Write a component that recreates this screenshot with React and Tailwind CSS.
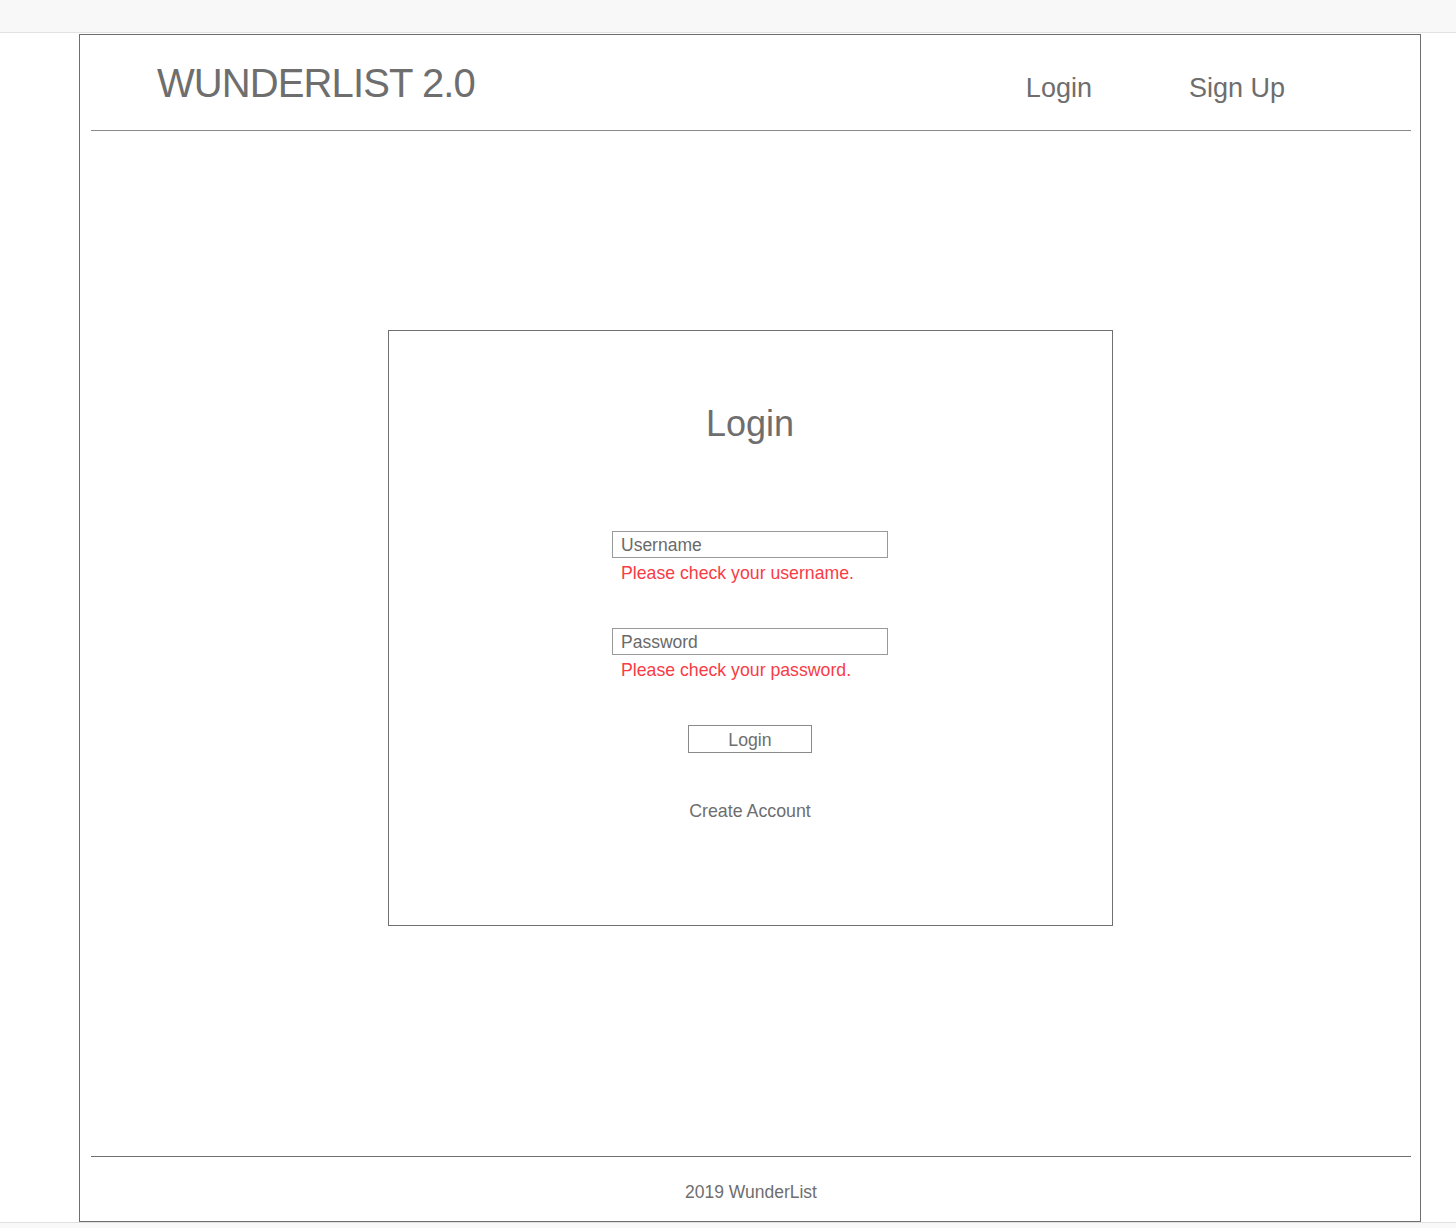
import React from "react";

export default function App() {
  const font = { fontFamily: '"Liberation Sans", Arial, Helvetica, sans-serif' };
  return (
    <div className="min-h-[1228px] bg-white text-[#6e6e6e]" style={font}>
      <div className="h-[33px] bg-[#f8f8f8] border-b border-[#e2e2e2]" />
      <div className="mt-px ml-[79px] w-[1342px] h-[1188px] border border-[#6e6e6e] flex flex-col">
        <header className="ml-[11px] mr-[9px] h-[96px] border-b border-[#8a8a8a] flex items-start pl-[66px] pr-[126px]">
          <div className="pt-[28px] text-[40px] leading-none tracking-[-0.9px]">WUNDERLIST 2.0</div>
          <nav className="ml-auto flex gap-[97px] pt-[40px] text-[27px] leading-none">
            <span>Login</span>
            <span>Sign Up</span>
          </nav>
        </header>
        <main className="flex-1">
          <div className="mt-[199px] mx-auto w-[725px] h-[596px] border border-[#707070] flex flex-col items-center">
            <h1 className="pt-[75px] text-[36px] leading-none">Login</h1>
            <div className="mt-[89px] w-[276px]">
              <div className="h-[27px] border border-[#999999] pl-[8px] pt-[3px] flex items-center text-[17.5px] leading-none text-[#6a6a6a]">
                Username
              </div>
              <div className="mt-[5px] pl-[9px] text-[17.7px] leading-[20px] text-[#f73c46]">
                Please check your username.
              </div>
            </div>
            <div className="mt-[45px] w-[276px]">
              <div className="h-[27px] border border-[#999999] pl-[8px] pt-[3px] flex items-center text-[17.5px] leading-none text-[#6a6a6a]">
                Password
              </div>
              <div className="mt-[5px] pl-[9px] text-[17.7px] leading-[20px] text-[#f73c46]">
                Please check your password.
              </div>
            </div>
            <div className="mt-[45px] w-[124px] h-[28px] border border-[#8a8a8a] pt-[3px] flex items-center justify-center text-[17.7px] leading-none">
              Login
            </div>
            <div className="mt-[48px] text-[17.8px] leading-[20px]">Create Account</div>
          </div>
        </main>
        <footer className="ml-[11px] mr-[9px] h-[65px] border-t border-[#707070] flex justify-center pt-[25px] text-[17.5px] leading-[20px]">
          2019 WunderList
        </footer>
      </div>
      <div className="border-t border-[#e0e0e0] bg-[#f8f8f8] h-[6px]" />
    </div>
  );
}
